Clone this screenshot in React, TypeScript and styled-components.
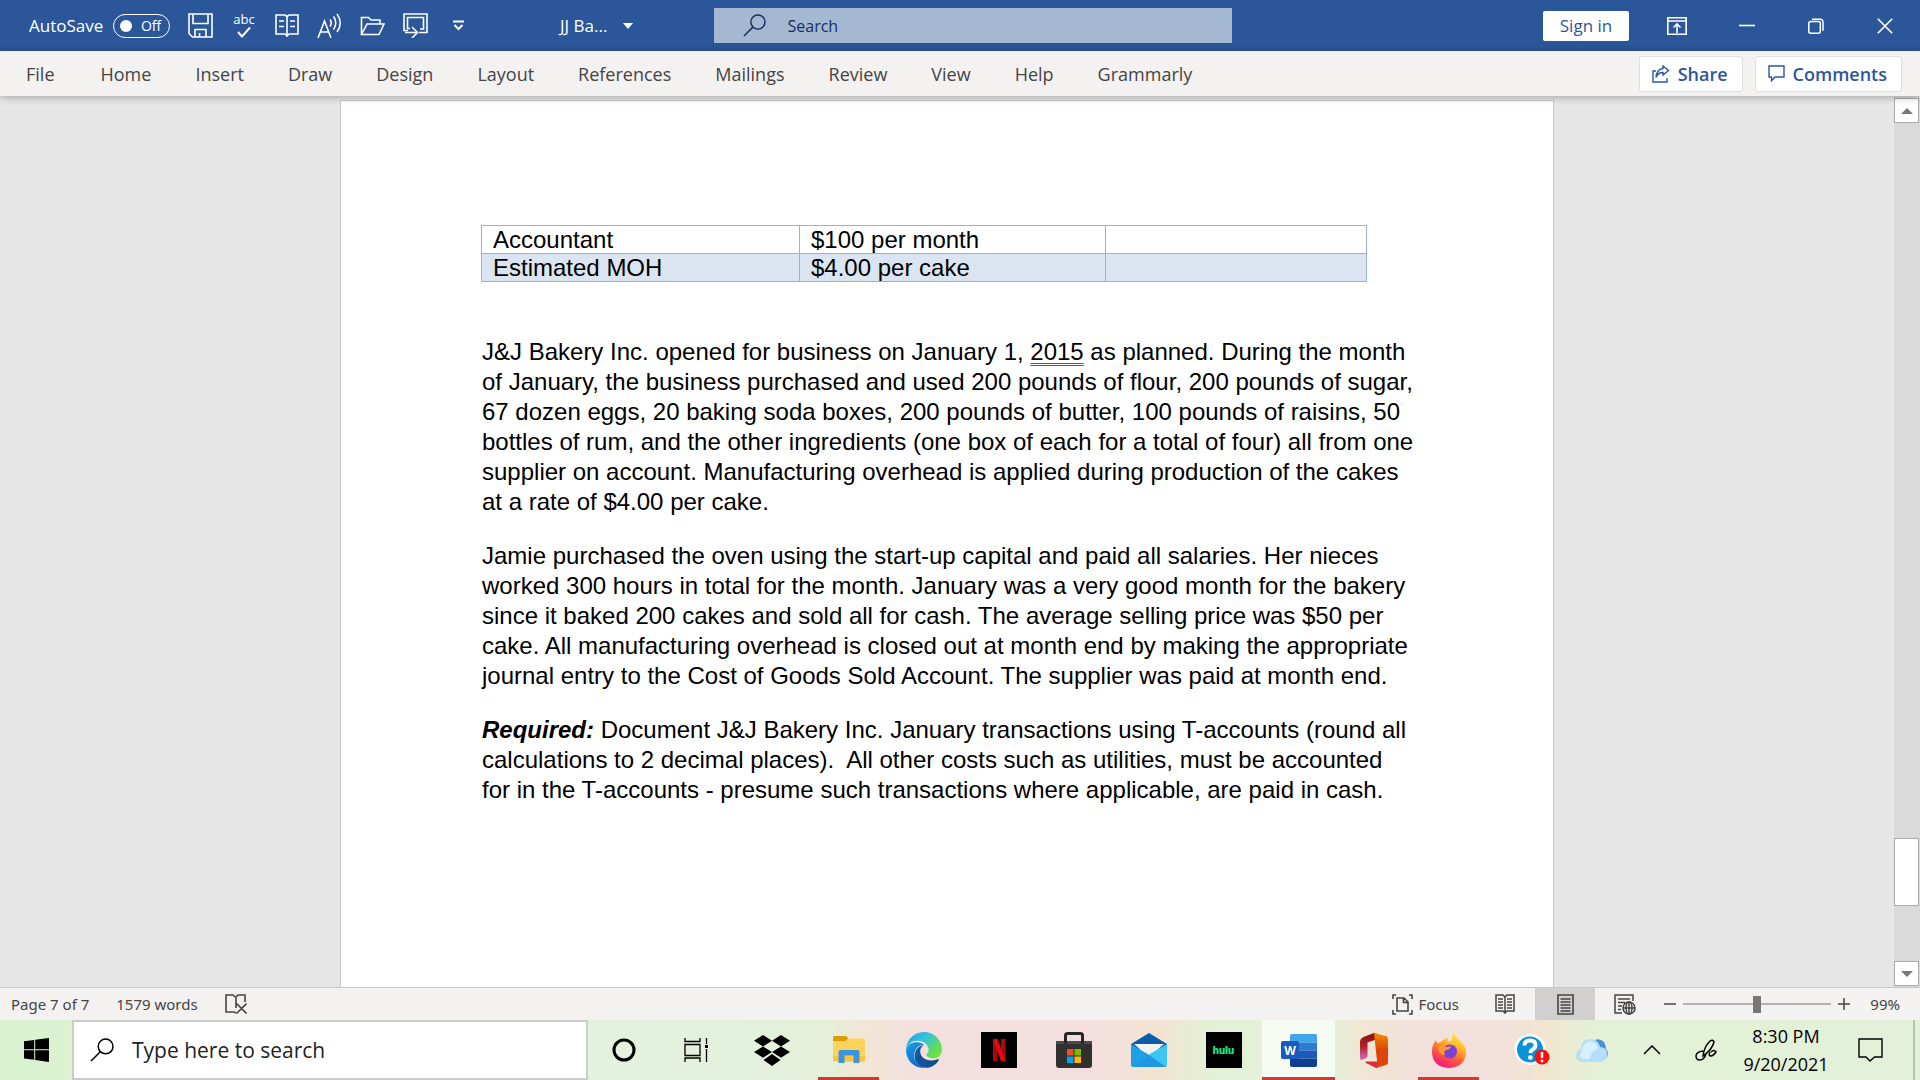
import React, { useState } from 'react';
import styled, { createGlobalStyle, css } from 'styled-components';

const ui = '"Open Sans", "Noto Sans", sans-serif';
const uiWide = '"Noto Sans", "Open Sans", sans-serif';

const GlobalStyle = createGlobalStyle`
  *, *::before, *::after { box-sizing: border-box; }
  body { margin: 0; font-family: ${ui}; overflow: hidden; }
  button, input { font-family: inherit; margin: 0; }
  button { border: 0; padding: 0; background: none; color: inherit; font-size: inherit; cursor: pointer; }
  svg { display: block; flex: none; }
`;

const Desktop = styled.div`
  display: flex;
  flex-direction: column;
  height: 100vh;
`;

/* Title bar */
const TitleBar = styled.header`
  display: flex;
  align-items: center;
  flex: none;
  height: 51px;
  background: #2b579a;
  color: #fff;
  font-size: 17px;
`;
const TitleSide = styled.div<{ $end?: boolean }>`
  flex: 1 1 0;
  display: flex;
  align-items: center;
  justify-content: ${(p) => (p.$end ? 'flex-end' : 'flex-start')};
  padding-left: ${(p) => (p.$end ? 0 : 25)}px;
`;
const AutoSave = styled.label`
  display: flex;
  align-items: center;
  gap: 10px;
  width: 150px;
  padding-left: 4px;
  white-space: nowrap;
`;
const Toggle = styled.button`
  display: flex;
  align-items: center;
  justify-content: space-between;
  flex: none;
  width: 57px;
  height: 24px;
  padding: 0 8px 0 6px;
  border: 1px solid #fff;
  border-radius: 12px;
  font-size: 14px;
  color: #fff;
  &::before {
    content: '';
    width: 12px;
    height: 12px;
    border-radius: 50%;
    background: #fff;
  }
`;
const QuickAccess = styled.div`
  display: flex;
  margin-left: 4px;
`;
const IconButton = styled.button<{ $w?: number }>`
  display: flex;
  align-items: center;
  justify-content: center;
  width: ${(p) => p.$w ?? 43}px;
  height: 36px;
`;
const DocTitle = styled.button`
  display: flex;
  align-items: center;
  gap: 16px;
  margin-left: 80px;
`;
const TitleSearch = styled.label`
  flex: 0 1 518px;
  display: flex;
  align-items: center;
  gap: 22px;
  height: 35px;
  padding-left: 29px;
  background: #a5b8d1;
  color: #12305f;
`;
const SearchInput = styled.input<{ $size: number; $color: string }>`
  flex: 1;
  min-width: 0;
  border: 0;
  padding: 0;
  outline: 0;
  background: transparent;
  font-size: ${(p) => p.$size}px;
  color: ${(p) => p.$color};
  &::placeholder { color: ${(p) => p.$color}; opacity: 1; }
`;
const SignIn = styled.button`
  width: 86px;
  height: 30px;
  margin-right: 13px;
  border-radius: 2px;
  background: #fff;
  color: #2b579a;
`;

/* Ribbon */
const Ribbon = styled.nav`
  position: relative;
  z-index: 1;
  display: flex;
  align-items: center;
  flex: none;
  height: 45px;
  padding: 0 18px 0 4px;
  background: #f3f2f1;
  box-shadow: 0 1px 8px rgba(0, 0, 0, 0.3);
`;
const Tab = styled.button`
  height: 45px;
  padding: 1px 22px 0;
  font-size: 18px;
  color: #444;
  &:first-child { padding-right: 24px; }
`;
const RibbonActions = styled.div`
  display: flex;
  gap: 12px;
  margin-left: auto;
`;
const ActionButton = styled.button`
  display: flex;
  align-items: center;
  gap: 8px;
  height: 36px;
  padding: 0 14px 0 12px;
  border: 1px solid #e1dfdd;
  border-radius: 3px;
  background: #fff;
  color: #2b579a;
  font-size: 18px;
  font-weight: 600;
`;

/* Document */
const Workspace = styled.main`
  display: flex;
  flex: 1;
  min-height: 0;
  background: #e6e6e6;
`;
const Canvas = styled.div`
  flex: 1;
  display: flex;
  justify-content: center;
  padding-top: 4px;
  overflow: hidden;
`;
const Page = styled.article`
  flex: 0 1 1214px;
  padding: 124px 124px 0 141px;
  border: 1px solid #c6c6c6;
  border-bottom: 0;
  background: #fff;
  color: #000;
  font: 24px/30px "Liberation Sans", Arial, sans-serif;
`;
const CostTable = styled.table`
  width: 885px;
  border-collapse: collapse;
  table-layout: fixed;
  margin: 0 0 55px -1px;
  td {
    height: 28px;
    padding: 0 11px;
    border: 1px solid #95b3d7;
    line-height: 27px;
  }
  tr:nth-child(2) td { background: #dbe5f1; }
`;
const Paragraph = styled.p`
  margin: 0 0 24px;
  white-space: pre;
`;
const Flagged = styled.span`
  text-decoration: underline double #1f5fe0 1px;
  text-underline-offset: 3px;
`;
const Scrollbar = styled.div`
  display: flex;
  flex-direction: column;
  width: 26px;
  padding: 2px 1px 1px 0;
  background: #dadada;
`;
const ScrollButton = styled.button`
  display: flex;
  align-items: center;
  justify-content: center;
  height: 25px;
  border: 1px solid #ababab;
  background: #fff;
`;
const ScrollTrack = styled.div`
  flex: 1;
  display: flex;
  flex-direction: column;
  justify-content: flex-end;
  padding-bottom: 55px;
`;
const ScrollThumb = styled.div`
  height: 68px;
  border: 1px solid #ababab;
  background: #fff;
`;

/* Status bar */
const StatusBar = styled.footer`
  display: flex;
  align-items: center;
  flex: none;
  height: 33px;
  padding: 0 20px 0 11px;
  border-top: 1px solid #c8c6c4;
  background: #f3f2f1;
  color: #444;
  font-family: ${uiWide};
  font-size: 15px;
`;
const StatusItem = styled.button<{ $gap?: number }>`
  display: flex;
  align-items: center;
  gap: 5px;
  margin-right: ${(p) => p.$gap ?? 0}px;
`;
const ViewControls = styled.div`
  display: flex;
  align-items: center;
  height: 100%;
  margin-left: auto;
`;
const ViewButton = styled.button<{ $active?: boolean }>`
  display: flex;
  align-items: center;
  justify-content: center;
  width: 60px;
  height: 32px;
  background: ${(p) => (p.$active ? '#d2d0ce' : 'transparent')};
`;
const ZoomGroup = styled.div`
  display: flex;
  align-items: center;
  gap: 7px;
  margin-left: 9px;
`;
const Zoom = styled.input`
  appearance: none;
  width: 148px;
  height: 20px;
  background: linear-gradient(#b3b0ad, #b3b0ad) center / 100% 2px no-repeat;
  &::-webkit-slider-thumb {
    appearance: none;
    width: 8px;
    height: 17px;
    background: #777;
  }
`;
const ZoomValue = styled.output`
  width: 43px;
  text-align: right;
`;

/* Taskbar */
const Taskbar = styled.footer`
  display: flex;
  flex: none;
  height: 60px;
  background: linear-gradient(90deg, #d9f2cf 0, #dff2d6 10%, #e3f1de 33%, #e4f0da 43%, #f1e6d4 45%, #f3e1de 47%, #f3dfde 57%, #f2e4d0 60.5%, #e2f1d6 63%, #e4f1da 69%, #f1e6d4 71%, #f2e0dc 74%, #f2e0dc 78%, #f1e6d0 80.5%, #e3f1d6 83%, #e4f1d9 100%);
`;
const TaskSlot = styled.button<{ $w?: number; $state?: 'open' | 'active' }>`
  position: relative;
  display: flex;
  align-items: center;
  justify-content: center;
  flex: none;
  width: ${(p) => p.$w ?? 75}px;
  ${(p) => p.$state && css`
    &::after {
      content: '';
      position: absolute;
      bottom: 0;
      left: ${p.$state === 'active' ? 1 : 7}px;
      right: ${p.$state === 'active' ? 1 : 7}px;
      height: 3px;
      background: #cf3a2b;
    }
  `}
  ${(p) => p.$state === 'active' && css`
    background: linear-gradient(#f5faf2, #f5faf2) center / 73px 100% no-repeat;
  `}
`;
const TaskSearch = styled.label`
  display: flex;
  align-items: center;
  flex: 0 1 516px;
  gap: 18px;
  padding-left: 16px;
  border: 2px solid #ccc;
  background: #fff;
`;
const Apps = styled.div`
  display: flex;
`;
const Tray = styled.div`
  display: flex;
  margin-left: auto;
`;
const Clock = styled.time`
  display: flex;
  flex-direction: column;
  align-items: center;
  justify-content: center;
  width: 97px;
  padding-left: 15px;
  white-space: nowrap;
  font-size: 18px;
  line-height: 28px;
  color: #000;
`;
const ShowDesktop = styled.button`
  width: 7px;
  border-left: 2px solid #b3c4aa;
`;
const AppTile = styled.span<{ $color: string; $size: number }>`
  display: flex;
  align-items: center;
  justify-content: center;
  width: 36px;
  height: 36px;
  background: #000;
  color: ${(p) => p.$color};
  font: 900 ${(p) => p.$size}px/1 Roboto, sans-serif;
`;

const Svg = ({ w, h, children, sw = 1.6 }: { w: number; h: number; children: React.ReactNode; sw?: number }) => (
  <svg width={w} height={h} viewBox={`0 0 ${w} ${h}`} fill="none" stroke="currentColor" strokeWidth={sw} aria-hidden="true">{children}</svg>
);

const Magnifier = ({ size }: { size: number }) => (
  <svg width={size} height={size} viewBox="0 0 24 24" fill="none" stroke="currentColor" strokeWidth="1.5" aria-hidden="true">
    <circle cx="15.6" cy="8.4" r="7.4" /><path d="M10.3 13.7 1 23" />
  </svg>
);

const SaveIcon = () => <Svg w={25} h={25}><path d="M1 1h23v23H4.500L1 20.500zM5 1v9.500h15V1M7 24v-7.500h11V24M11.500 20v4" /></Svg>;
const SpellIcon = () => (
  <svg width="24" height="30" viewBox="0 0 24 30" fill="none" stroke="currentColor" strokeWidth="1.900" aria-hidden="true">
    <text x="12" y="13" textAnchor="middle" fontSize="13" fill="currentColor" stroke="none">abc</text>
    <path d="m6 21 4 4.500 8-9" />
  </svg>
);
const BookIcon = () => <Svg w={24} h={25}><path d="M12 3.500 10 2H1v19h9l2 2 2-2h9V2h-9zM12 3.500V23M4 8h5M4 13.500h5M15 8h5M15 13.500h5" /></Svg>;
const ReadAloudIcon = () => <Svg w={25} h={26}><path d="M1 25 7.500 8 14 25M3.200 19h8.600M13 6.500q2.500 3.200 0 7M16.500 3.500q4.500 5.800 0 13M20 1q6.500 9 0 18" /></Svg>;
const FolderOpenIcon = () => <Svg w={25} h={20}><path d="M1.500 18.500V1.500h7l2.500 2.500h9V8M1.500 18.500 7 8h17l-5 10.500z" /></Svg>;
const TouchIcon = () => <Svg w={25} h={25}><path d="M5 17.500H1V1h23v18.500h-8M7 15.500H4.500V4.500h16V16H17M2 19.500h12M9 14l5.500 5.500L9 25" /></Svg>;
const MoreIcon = () => <Svg w={11} h={11} sw={2}><path d="M0 1.500h11M1.500 5l4 4 4-4" /></Svg>;
const Triangle = ({ up, color = 'currentColor', w = 10 }: { up?: boolean; color?: string; w?: number }) => (
  <svg width={w} height="6" viewBox="0 0 10 6" preserveAspectRatio="none" aria-hidden="true"><path d={up ? 'M0 6h10L5 0z' : 'M0 0h10L5 6z'} fill={color} /></svg>
);
const RibbonDisplayIcon = () => <Svg w={20} h={18}><path d="M.8.8h18.400v16.400H.8zM.8 4h18.400M10 16V7.500M6.500 10.500 10 7l3.500 3.500" /></Svg>;
const MinimizeIcon = () => <Svg w={16} h={16}><path d="M0 7.500h16" /></Svg>;
const RestoreIcon = () => <Svg w={16} h={16} sw={1.5}><rect x=".8" y="3.500" width="11.500" height="11.700" rx="2" /><path d="M4 1.200h8q3 0 3 3v8.500" /></Svg>;
const CloseIcon = () => <Svg w={16} h={16}><path d="m.8.8 14.400 14.400M15.200.8.8 15.200" /></Svg>;
const ShareIcon = () => <Svg w={18} h={18} sw={1.4}><path d="M4 6H1v11h14v-4M11 1l5.500 4.500L11 10V7.500q-5 0-7 5 .5-8 7-9z" /></Svg>;
const CommentIcon = () => <Svg w={17} h={17} sw={1.4}><path d="M1 1h15v11H7l-3.500 3.800V12H1z" /></Svg>;

const ProofIcon = () => <Svg w={22} h={20}><path d="M10 3 8 1H1v17h8l2 1M11 11V3l2-2h7v7M11 11v3M11.500 9.500l10 10M21.500 9.500l-10 10" /></Svg>;
const FocusIcon = () => <Svg w={21} h={21}><path d="M4 1H1v4M17 1h3v4M4 20H1v-4M17 20h3v-4M5 4h7l4 4v9H5zM11.500 4v4.500H16" /></Svg>;
const ReadIcon = () => <Svg w={20} h={20} sw={1.5}><path d="M10 3 8 1H1v16h7l2 2 2-2h7V1h-7zM10 3v16M3 5h5M3 8h5M3 11h5M3 14h5M12 5h5M12 8h5M12 11h5M12 14h5" /></Svg>;
const PrintIcon = () => <Svg w={17} h={21}><path d="M1 1h15v19H1zM3.500 5h10M3.500 8h10M3.500 11h10M3.500 14h10M3.500 17h10" /></Svg>;
const WebIcon = () => <Svg w={22} h={21} sw={1.5}><path d="M8 19H1V1h18v6M4 5h12M4 8.500h7M4 12h4M4 15.500h3" /><circle cx="15" cy="14" r="6" /><path d="M9 14h12M15 8v12" /><ellipse cx="15" cy="14" rx="3" ry="6" /></Svg>;
const MinusIcon = () => <Svg w={12} h={12} sw={1.5}><path d="M0 6h12" /></Svg>;
const PlusIcon = () => <Svg w={12} h={12} sw={1.5}><path d="M0 6h12M6 0v12" /></Svg>;

const StartIcon = () => <svg width="25" height="24" viewBox="0 0 25 24" aria-hidden="true"><path d="M0 3.300 10.200 2v9.300H0zM11.200 1.800 25 0v11.300H11.200zM0 12.300h10.200v9.400L0 20.400zM11.200 12.300H25V24l-13.800-2z" /></svg>;
const CortanaIcon = () => <Svg w={24} h={24} sw={3}><circle cx="12" cy="12" r="10" /></Svg>;
const TaskViewIcon = () => <Svg w={24} h={24} sw={1.3}><path d="M1 0v3.500h15V0M1 6.500h15v11H1zM1 24v-4h15v4M22.500 0v6M22.500 11v13" /><path d="M21 7h3v3h-3z" fill="#000" stroke="none" /></Svg>;
const DropboxIcon = () => (
  <svg width="36" height="31" viewBox="0 0 36 31" aria-hidden="true"><path d="M9 0l9 5.700-9 5.700-9-5.700zM27 0l9 5.700-9 5.700-9-5.700zM9 11.400l9 5.700-9 5.700-9-5.700zM27 11.400l9 5.700-9 5.700-9-5.700zM18 19l8.500 6-8.500 6-8.500-6z" /></svg>
);
const ExplorerIcon = () => (
  <svg width="32" height="28" viewBox="0 0 32 28" aria-hidden="true">
    <path d="M0 1.500Q0 0 1.500 0h11q1 0 1.500 1l1 1.500h15.500Q32 2.500 32 4v20q0 1.500-1.500 1.500h-29Q0 25.500 0 24z" fill="#ffd25c" />
    <path d="M0 5V1.500Q0 0 1.500 0h11q1 0 1.700 1l.8 1.500L13 5z" fill="#df9b06" />
    <path d="M0 20h32v4q0 1.500-1.500 1.500h-29Q0 25.500 0 24z" fill="#fbc43c" />
    <path d="M5.500 27V16q0-2 2-2h17q2 0 2 2v11h-6v-7.500h-9V27z" fill="#3b94dc" />
  </svg>
);
const EdgeIcon = () => (
  <svg width="36" height="36" viewBox="0 0 256 256" aria-hidden="true">
    <defs>
      <linearGradient id="eA" x1=".1" y1="0" x2="1" y2="0.600"><stop stopColor="#2aa6e8" /><stop offset=".45" stopColor="#35c4d8" /><stop offset="1" stopColor="#6be23f" /></linearGradient>
      <linearGradient id="eB" x1="0" y1="0" x2=".6" y2="1"><stop stopColor="#1ba0e0" /><stop offset="1" stopColor="#0a6bd0" /></linearGradient>
      <linearGradient id="eC" x1="0" y1="0" x2="1" y2="0"><stop stopColor="#1358a0" /><stop offset="1" stopColor="#104a8c" /></linearGradient>
    </defs>
    <path d="M231 190c-4 2-8 4-12 5-60 22-118-8-118-58 0-18 10-34 26-42-34 2-66 34-66 78 0 48 38 82 84 82 34 0 66-20 86-50 3-6 0-15 0-15z" fill="url(#eC)" />
    <path d="M106 241C52 224 44 150 78 112c12-13 30-22 49-20C100 60 12 64 0 128c0 72 52 126 124 128 10 0-8-9-18-15z" fill="url(#eB)" />
    <path d="M152 149c-2 3-7 7-7 14 0 12 24 24 54 24 34 0 57-26 57-60C256 54 198 0 128 0 52 0 0 60 0 128c8-48 52-70 90-66 48 4 76 42 70 72-2 8-5 12-8 15z" fill="url(#eA)" />
  </svg>
);
const NetflixIcon = () => (
  <svg width="36" height="36" viewBox="0 0 36 36" aria-hidden="true"><path d="M0 0h36v36H0z" /><path d="M12 7h4.500v22H12zM20 7h4.500v22H20z" fill="#a50a12" /><path d="M12 7h4.500l8 22H20z" fill="#e50914" /></svg>
);
const StoreIcon = () => (
  <svg width="36" height="36" viewBox="0 0 36 36" aria-hidden="true">
    <path d="M9.500 12V3.500q0-2 2-2h13q2 0 2 2V12" fill="none" stroke="#262626" strokeWidth="3" />
    <path d="M0 9h36v24q0 3-3 3H3q-3 0-3-3z" fill="#303030" /><path d="M0 9h36v3H0z" fill="#4a4a4a" /><path d="M8 9h3v3H8zM25 9h3v3h-3z" fill="#262626" />
    <path d="M11 17h6.500v6.500H11z" fill="#f25022" /><path d="M18.500 17H25v6.500h-6.500z" fill="#7fba00" /><path d="M11 24.500h6.500V31H11z" fill="#00a4ef" /><path d="M18.500 24.500H25V31h-6.500z" fill="#ffb900" />
  </svg>
);
const MailIcon = () => (
  <svg width="36" height="34" viewBox="0 0 36 34" aria-hidden="true">
    <path d="M0 11 18 0l18 11v5H0z" fill="#0c5cab" /><path d="M3 11h30L18 24z" fill="#f2f2f2" />
    <path d="M0 11v21q0 2 2 2h32L18 22z" fill="#1f9fe8" /><path d="M36 11v21q0 2-2 2L17 22z" fill="#3cc5f5" /><path d="m2 34 16-12 17 12z" fill="#1e96e2" />
  </svg>
);
const WordIcon = () => (
  <svg width="36" height="33" viewBox="0 0 36 33" aria-hidden="true">
    <path d="M9 2q0-2 2-2h23q2 0 2 2v6.500H9z" fill="#41a5ee" /><path d="M9 8.500h27v8H9z" fill="#2b7cd3" /><path d="M9 16.500h27v8H9z" fill="#185abd" /><path d="M9 24.500h27V31q0 2-2 2H11q-2 0-2-2z" fill="#103f91" />
    <rect y="7" width="18" height="18" rx="2" fill="#185abd" />
    <text x="9" y="20.500" textAnchor="middle" fontSize="12" fontWeight="700" fill="#fff">W</text>
  </svg>
);
const OfficeIcon = () => (
  <svg width="28" height="35" viewBox="0 0 28 35" aria-hidden="true">
    <defs>
      <linearGradient id="oA" x1="0" y1="0" x2="0" y2="1"><stop stopColor="#8c1010" /><stop offset=".5" stopColor="#b3202c" /><stop offset="1" stopColor="#cf72c4" /></linearGradient>
      <linearGradient id="oB" x1="0" y1="0" x2="0" y2="1"><stop stopColor="#f58a07" /><stop offset=".5" stopColor="#dd4409" /><stop offset="1" stopColor="#e0450c" /></linearGradient>
    </defs>
    <path d="M5.500 28.500h12V6l9-3v28L16 35l-10-5q-1.500-1 0-1.500z" fill="#d92f35" />
    <path d="M0 24V9q0-3.500 3.500-5L14 0l3.500 1v5L7.500 9.500V23q0 1.500-1.500 2.200L1.500 27Q0 27 0 24z" fill="url(#oA)" />
    <path d="M14 0l11.500 3Q28 3.800 28 6.500V29q0 2.500-2.500 3.200L16 35q1.500-1 1.500-3z" fill="url(#oB)" />
  </svg>
);
const FirefoxIcon = () => (
  <svg width="34" height="35" viewBox="0 0 34 35" aria-hidden="true">
    <defs>
      <linearGradient id="fA" x1=".8" y1="0" x2=".3" y2="1"><stop stopColor="#fff04a" /><stop offset=".35" stopColor="#ffb52a" /><stop offset=".65" stopColor="#ff5a36" /><stop offset="1" stopColor="#f0148c" /></linearGradient>
    </defs>
    <path d="M22 0q3 5 6 8 6 5 6 12-1 14-17 15Q1 34 0 20-.3 12 4 7l1 3 4-1q4-4 7-4-1 2 0 4l4-2q-1-4 2-7z" fill="url(#fA)" />
    <circle cx="18" cy="18.500" r="7" fill="#7a42d8" />
    <path d="M5 14q3-2 6-1 4 2 8 0-1 4-5 4-3 2-1 5-5 0-6-4z" fill="#ff9a26" />
  </svg>
);
const HelpIcon = () => (
  <svg width="36" height="32" viewBox="0 0 36 32" aria-hidden="true">
    <circle cx="16" cy="15.500" r="15.500" fill="#fff" /><circle cx="16" cy="15.500" r="13" fill="#0a93d8" />
    <path d="M10.500 11.500q0-5 5.500-5t5.500 4.500q0 3-3 4.500-2 1-2 3.500" fill="none" stroke="#fff" strokeWidth="3.800" /><circle cx="16.300" cy="23.500" r="2.300" fill="#fff" />
    <circle cx="28" cy="23" r="7.500" fill="#f50f0f" /><path d="M28 18v6" stroke="#fff" strokeWidth="2.500" /><circle cx="28" cy="27" r="1.400" fill="#fff" />
  </svg>
);
const WeatherIcon = () => (
  <svg width="32" height="23" viewBox="0 0 32 23" aria-hidden="true">
    <path d="M17 2q6-4 11 1 2 3 2 7 3 3 1 8l-6 2z" fill="#4a8fd0" />
    <path d="M7 23Q0 23 0 16.500 0 11 5 10 5 0 14 0q8 0 10 8 7 0 7 7 0 8-7 8z" fill="#b5defb" /><path d="M7 20Q2 18 5 13q1-8 9-11 7 2 8 8-8 3-8 10z" fill="#d8effd" />
  </svg>
);
const ChevronUp = () => <Svg w={18} h={10} sw={1.5}><path d="m1 9 8-8 8 8" /></Svg>;
const PenIcon = () => <Svg w={22} h={22} sw={1.5}><path d="M8 17Q9 8 15 2q3-2 4 1-2 8-11 14zM8 12q-7 1-7 5 0 4 4 4 4 0 6-6M15 13q-2 4 1 4 2 0 5-4-2-3-5 0" /></Svg>;
const NotificationIcon = () => <Svg w={25} h={24} sw={1.4}><path d="M1 1h23v18h-7.500L12 23l-4-4H1z" /></Svg>;

const tabs = ['File', 'Home', 'Insert', 'Draw', 'Design', 'Layout', 'References', 'Mailings', 'Review', 'View', 'Help', 'Grammarly'];

const quickActions = [
  { label: 'Save', icon: <SaveIcon /> },
  { label: 'Spelling', icon: <SpellIcon /> },
  { label: 'Read mode', icon: <BookIcon /> },
  { label: 'Read aloud', icon: <ReadAloudIcon /> },
  { label: 'Open', icon: <FolderOpenIcon /> },
  { label: 'Touch mode', icon: <TouchIcon /> },
  { label: 'Customize toolbar', icon: <MoreIcon /> },
];

const apps: { label: string; icon: React.ReactNode; state?: 'open' | 'active' }[] = [
  { label: 'File Explorer', icon: <ExplorerIcon />, state: 'open' },
  { label: 'Edge', icon: <EdgeIcon /> },
  { label: 'Netflix', icon: <NetflixIcon /> },
  { label: 'Store', icon: <StoreIcon /> },
  { label: 'Mail', icon: <MailIcon /> },
  { label: 'Hulu', icon: <AppTile $color="#1ce783" $size={11}>hulu</AppTile> },
  { label: 'Word', icon: <WordIcon />, state: 'active' },
  { label: 'Office', icon: <OfficeIcon /> },
  { label: 'Firefox', icon: <FirefoxIcon />, state: 'open' },
];

export default function App() {
  const [zoom, setZoom] = useState(99);
  return (
    <Desktop>
      <GlobalStyle />
      <TitleBar>
        <TitleSide>
          <AutoSave>AutoSave<Toggle aria-label="AutoSave">Off</Toggle></AutoSave>
          <QuickAccess>
            {quickActions.map((a) => <IconButton key={a.label} aria-label={a.label}>{a.icon}</IconButton>)}
          </QuickAccess>
          <DocTitle>JJ Ba...<Triangle /></DocTitle>
        </TitleSide>
        <TitleSearch>
          <Magnifier size={23} />
          <SearchInput $size={16} $color="#12305f" placeholder="Search" aria-label="Search document" />
        </TitleSearch>
        <TitleSide $end>
          <SignIn>Sign in</SignIn>
          <IconButton $w={70} aria-label="Ribbon display options"><RibbonDisplayIcon /></IconButton>
          <IconButton $w={69} aria-label="Minimize"><MinimizeIcon /></IconButton>
          <IconButton $w={69} aria-label="Restore"><RestoreIcon /></IconButton>
          <IconButton $w={70} aria-label="Close"><CloseIcon /></IconButton>
        </TitleSide>
      </TitleBar>

      <Ribbon>
        {tabs.map((t) => <Tab key={t}>{t}</Tab>)}
        <RibbonActions>
          <ActionButton><ShareIcon />Share</ActionButton>
          <ActionButton><CommentIcon />Comments</ActionButton>
        </RibbonActions>
      </Ribbon>

      <Workspace>
        <Canvas>
          <Page>
            <CostTable>
              <colgroup><col width="318" /><col width="306" /><col width="261" /></colgroup>
              <tbody>
                <tr><td>Accountant</td><td>$100 per month</td><td /></tr>
                <tr><td>Estimated MOH</td><td>$4.00 per cake</td><td /></tr>
              </tbody>
            </CostTable>
            <Paragraph>
              J&amp;J Bakery Inc. opened for business on January 1, <Flagged>2015</Flagged> as planned. During the month<br />
              of January, the business purchased and used 200 pounds of flour, 200 pounds of sugar,<br />
              67 dozen eggs, 20 baking soda boxes, 200 pounds of butter, 100 pounds of raisins, 50<br />
              bottles of rum, and the other ingredients (one box of each for a total of four) all from one<br />
              supplier on account. Manufacturing overhead is applied during production of the cakes<br />
              at a rate of $4.00 per cake.
            </Paragraph>
            <Paragraph>
              Jamie purchased the oven using the start-up capital and paid all salaries. Her nieces<br />
              worked 300 hours in total for the month. January was a very good month for the bakery<br />
              since it baked 200 cakes and sold all for cash. The average selling price was $50 per<br />
              cake. All manufacturing overhead is closed out at month end by making the appropriate<br />
              journal entry to the Cost of Goods Sold Account. The supplier was paid at month end.
            </Paragraph>
            <Paragraph>
              <b><i>Required:</i></b> Document J&amp;J Bakery Inc. January transactions using T-accounts (round all<br />
              calculations to 2 decimal places).&nbsp; All other costs such as utilities, must be accounted<br />
              for in the T-accounts - presume such transactions where applicable, are paid in cash.
            </Paragraph>
          </Page>
        </Canvas>
        <Scrollbar>
          <ScrollButton aria-label="Scroll up"><Triangle up color="#777" w={12} /></ScrollButton>
          <ScrollTrack><ScrollThumb /></ScrollTrack>
          <ScrollButton aria-label="Scroll down"><Triangle color="#777" w={12} /></ScrollButton>
        </Scrollbar>
      </Workspace>

      <StatusBar>
        <StatusItem $gap={27}>Page 7 of 7</StatusItem>
        <StatusItem $gap={27}>1579 words</StatusItem>
        <StatusItem aria-label="Proofing errors"><ProofIcon /></StatusItem>
        <ViewControls>
          <StatusItem $gap={16}><FocusIcon />Focus</StatusItem>
          <ViewButton aria-label="Read mode"><ReadIcon /></ViewButton>
          <ViewButton $active aria-label="Print layout"><PrintIcon /></ViewButton>
          <ViewButton aria-label="Web layout"><WebIcon /></ViewButton>
          <ZoomGroup>
            <IconButton $w={12} aria-label="Zoom out" onClick={() => setZoom(zoom - 1)}><MinusIcon /></IconButton>
            <Zoom type="range" min="0" max="198" value={zoom} aria-label="Zoom" onChange={(e) => setZoom(Number(e.target.value))} />
            <IconButton $w={12} aria-label="Zoom in" onClick={() => setZoom(zoom + 1)}><PlusIcon /></IconButton>
            <ZoomValue>{zoom}%</ZoomValue>
          </ZoomGroup>
        </ViewControls>
      </StatusBar>

      <Taskbar>
        <TaskSlot $w={72} aria-label="Start"><StartIcon /></TaskSlot>
        <TaskSearch>
          <Magnifier size={24} />
          <SearchInput $size={21} $color="#222" placeholder="Type here to search" aria-label="Type here to search" />
        </TaskSearch>
        <TaskSlot $w={72} aria-label="Cortana"><CortanaIcon /></TaskSlot>
        <TaskSlot $w={72} aria-label="Task view"><TaskViewIcon /></TaskSlot>
        <TaskSlot $w={79} aria-label="Dropbox"><DropboxIcon /></TaskSlot>
        <Apps>
          {apps.map((a) => <TaskSlot key={a.label} $state={a.state} aria-label={a.label}>{a.icon}</TaskSlot>)}
        </Apps>
        <Tray>
          <TaskSlot $w={60} aria-label="Get help"><HelpIcon /></TaskSlot>
          <TaskSlot $w={60} aria-label="Weather"><WeatherIcon /></TaskSlot>
          <TaskSlot $w={60} aria-label="Show hidden icons"><ChevronUp /></TaskSlot>
          <TaskSlot $w={48} aria-label="Pen"><PenIcon /></TaskSlot>
          <Clock><span>8:30 PM</span><span>9/20/2021</span></Clock>
          <TaskSlot $w={86} aria-label="Notifications"><NotificationIcon /></TaskSlot>
          <ShowDesktop aria-label="Show desktop" />
        </Tray>
      </Taskbar>
    </Desktop>
  );
}
